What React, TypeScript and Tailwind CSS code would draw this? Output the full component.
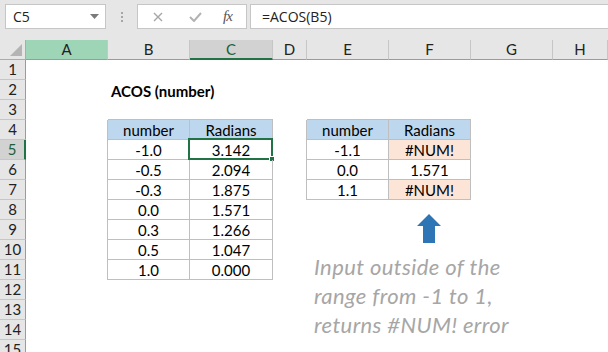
import React from 'react';

type Col = { key: string; w: string };

const cols: Col[] = [
  { key: 'A', w: 'w-[82px]' },
  { key: 'B', w: 'w-[82px]' },
  { key: 'C', w: 'w-[83px]' },
  { key: 'D', w: 'w-[34px]' },
  { key: 'E', w: 'w-[82px]' },
  { key: 'F', w: 'w-[82px]' },
  { key: 'G', w: 'w-[82px]' },
  { key: 'H', w: 'w-[55px]' },
];

const rows = Array.from({ length: 15 }, (_, i) => i + 1);

const hdr = 'bg-[#bdd7ee]';
const err = 'bg-[#fce4d6]';

const values: Record<string, string> = {
  B2: 'ACOS (number)',
  B4: 'number', C4: 'Radians',
  B5: '-1.0', C5: '3.142',
  B6: '-0.5', C6: '2.094',
  B7: '-0.3', C7: '1.875',
  B8: '0.0', C8: '1.571',
  B9: '0.3', C9: '1.266',
  B10: '0.5', C10: '1.047',
  B11: '1.0', C11: '0.000',
  E4: 'number', F4: 'Radians',
  E5: '-1.1', F5: '#NUM!',
  E6: '0.0', F6: '1.571',
  E7: '1.1', F7: '#NUM!',
};

const fills: Record<string, string> = {
  B4: hdr, C4: hdr, E4: hdr, F4: hdr,
  F5: err, F7: err,
};

const inTable = (c: string, r: number) =>
  (['B', 'C'].includes(c) && r >= 4 && r <= 11) || (['E', 'F'].includes(c) && r >= 4 && r <= 7);

const borderClass = (c: string, r: number) => {
  if (inTable(c, r)) return 'border-r border-b border-[#bfbfbf]';
  const right = (c === 'A' && r >= 4 && r <= 11) || (c === 'D' && r >= 4 && r <= 7);
  const bottom = r === 3 && ['B', 'C', 'E', 'F'].includes(c);
  if (right) return 'border-r border-[#bfbfbf]';
  if (bottom) return 'border-b border-[#bfbfbf]';
  return '';
};

function Cell({ col, row }: { col: Col; row: number }) {
  const id = `${col.key}${row}`;
  const v = values[id];
  const title = id === 'B2';
  const active = id === 'C5';
  return (
    <div
      className={`relative h-[20px] shrink-0 box-border flex items-center whitespace-nowrap ${col.w} ${borderClass(col.key, row)} ${fills[id] ?? ''} ${
        title ? 'justify-start pl-[3px] font-bold' : 'justify-center'
      }`}
    >
      {v && <span className="relative top-[1px]">{v}</span>}
      {active && (
        <>
          <div className="absolute -left-[2px] -top-[2px] w-[85px] h-[22px] border-2 border-[#217346]" />
          <div className="absolute -right-[3px] -bottom-[3px] w-[6px] h-[6px] bg-[#217346] border border-white" />
        </>
      )}
    </div>
  );
}

export default function App() {
  return (
    <div className="relative w-[608px] h-[352px] overflow-hidden bg-white text-[15px] text-black font-['Lato',sans-serif]">
      {/* formula bar */}
      <div className="h-[40px] bg-[#e6e6e6] flex items-start pt-[4px]">
        <div className="ml-[5px] w-[101px] h-[25px] bg-white border border-[#c6c6c6] flex items-center pl-[7px] pr-[6px] font-['Open_Sans',sans-serif] text-[14px] text-[#222]">
          <span className="flex-1">C5</span>
          <svg width="9" height="5" viewBox="0 0 9 5"><path d="M0 0h9L4.5 5z" fill="#7a7a7a" /></svg>
        </div>
        <div className="ml-[14px] w-[3px] h-[25px] flex flex-col items-center justify-center gap-[2px]">
          <div className="w-[2px] h-[2px] bg-[#a6a6a6]" />
          <div className="w-[2px] h-[2px] bg-[#a6a6a6]" />
          <div className="w-[2px] h-[2px] bg-[#a6a6a6]" />
        </div>
        <div className="ml-[14px] w-[110px] h-[25px] bg-white border border-[#c6c6c6] flex items-center">
          <svg className="ml-[15px]" width="10" height="10" viewBox="0 0 10 10">
            <path d="M1 1l8 8M9 1l-8 8" stroke="#a6a6a6" strokeWidth="1.4" />
          </svg>
          <svg className="ml-[26px]" width="13" height="10" viewBox="0 0 13 10">
            <path d="M1 5l4 4 7-8" stroke="#b3b3b3" strokeWidth="2" fill="none" />
          </svg>
          <span className="ml-[21px] font-['Liberation_Serif',serif] italic text-[15px] text-[#555] tracking-[-1px]">fx</span>
        </div>
        <div className="ml-[3px] flex-1 h-[25px] bg-white border-y border-l border-[#c6c6c6] flex items-center pl-[11px] font-['Open_Sans',sans-serif] text-[14px] text-[#222]">
          =ACOS(B5)
        </div>
      </div>

      {/* column headers */}
      <div className="flex h-[20px]">
        <div className="w-[26px] h-[20px] shrink-0 box-border bg-[#e6e6e6] border-r border-b border-[#ababab] relative">
          <svg className="absolute right-[3px] bottom-[3px]" width="12" height="12" viewBox="0 0 12 12">
            <path d="M12 0V12H0z" fill="#b4b4b4" />
          </svg>
        </div>
        {cols.map((c) => {
          const sel = c.key === 'C';
          const a = c.key === 'A';
          return (
            <div
              key={c.key}
              className={`${c.w} h-[20px] shrink-0 box-border flex items-center justify-center border-r border-[#c6c6c6] ${
                sel
                  ? 'bg-[#d2d2d2] border-b-2 border-b-[#217346] text-[#1e5f3b]'
                  : a
                  ? 'bg-[#9fd5b7] border-b border-b-[#9b9b9b] text-[#222]'
                  : 'bg-[#e6e6e6] border-b border-b-[#9b9b9b] text-[#222]'
              }`}
            >
              {c.key}
            </div>
          );
        })}
      </div>

      {/* rows */}
      {rows.map((r) => (
        <div key={r} className="flex h-[20px]">
          <div
            className={`w-[26px] h-[20px] shrink-0 box-border flex items-center justify-center border-b border-[#c6c6c6] ${
              r === 5
                ? 'bg-[#d2d2d2] border-r-2 border-r-[#217346] text-[#1e5f3b]'
                : 'bg-[#e6e6e6] border-r border-r-[#9b9b9b] text-[#222]'
            }`}
          >
            {r}
          </div>
          {cols.map((c) => (
            <Cell key={c.key} col={c} row={r} />
          ))}
        </div>
      ))}

      {/* floating shapes */}
      <svg className="absolute left-[417px] top-[214px]" width="24" height="30" viewBox="0 0 24 30">
        <path d="M12 0L24 12H18V29H6V12H0z" fill="#2e75b6" />
      </svg>
      <div className="absolute left-[314px] top-[252px] italic text-[22px] leading-[29px] tracking-[0.4px] text-[#a6a6a6] whitespace-nowrap">
        <div>Input outside of the</div>
        <div>range from -1 to 1,</div>
        <div>returns #NUM! error</div>
      </div>
    </div>
  );
}
